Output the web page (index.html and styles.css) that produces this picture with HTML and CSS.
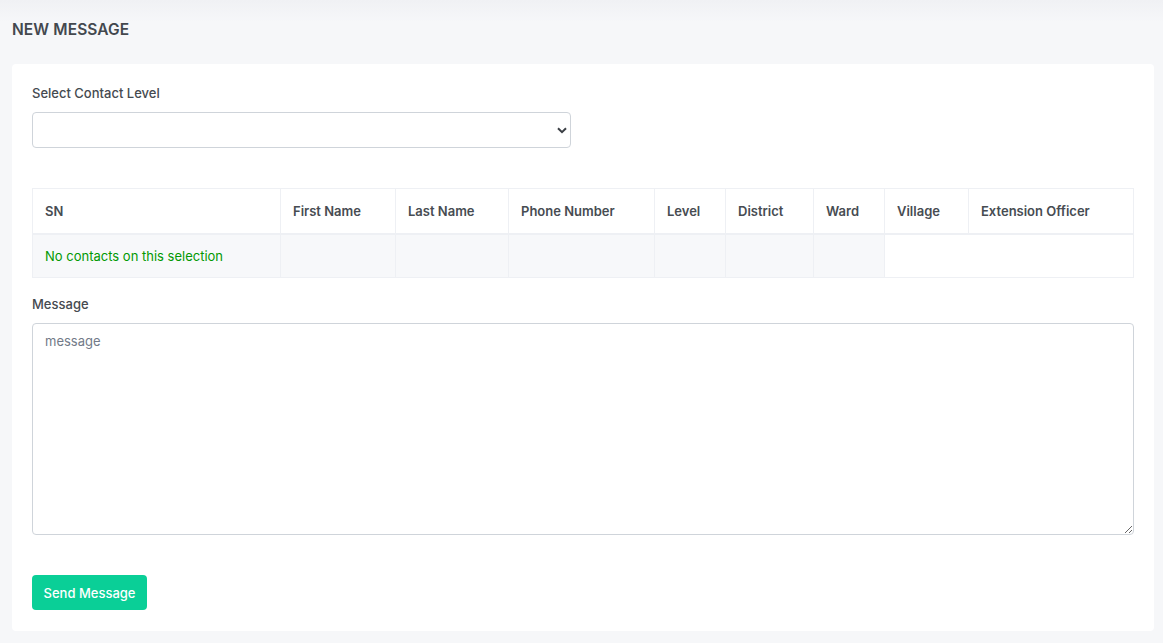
FILE: index.html
```html
<!DOCTYPE html>
<html>
<head>
<meta charset="utf-8">
<link rel="stylesheet" href="styles.css">
</head>
<body>
<div class="page">
  <h4 class="page-title">NEW MESSAGE</h4>
  <div class="card">
    <div class="form-group">
      <label class="form-label">Select Contact Level</label>
      <div class="select-wrap">
        <select class="form-select"><option></option></select>
        <svg class="chev" width="10" height="7" viewBox="0 0 10 7"><path d="M1 1.2 L5 5.2 L9 1.2" fill="none" stroke="#3b3f45" stroke-width="2"/></svg>
      </div>
    </div>
    <table class="table">
      <colgroup>
        <col class="c-sn"><col class="c-first"><col class="c-last"><col class="c-phone"><col class="c-level"><col class="c-district"><col class="c-ward"><col class="c-village"><col class="c-officer">
      </colgroup>
      <thead>
        <tr><th>SN</th><th>First Name</th><th>Last Name</th><th>Phone Number</th><th>Level</th><th>District</th><th>Ward</th><th>Village</th><th>Extension Officer</th></tr>
      </thead>
      <tbody>
        <tr><td class="empty-msg">No contacts on this selection</td><td></td><td></td><td></td><td></td><td></td><td></td><td class="blank" colspan="2"></td></tr>
      </tbody>
    </table>
    <div class="form-group msg">
      <label class="form-label">Message</label>
      <textarea class="form-control" placeholder="message"></textarea>
    </div>
    <button class="btn-success">Send Message</button>
  </div>
</div>
</body>
</html>
```
FILE: styles.css
```css
html, body {
  margin: 0;
  padding: 0;
}
body {
  background: linear-gradient(to bottom, #f0f1f4 0px, #f6f7f9 22px, #f6f7f9 100%);
  font-family: Inter, "Noto Sans", sans-serif;
  font-size: 13px;
  color: #495057;
  min-height: 643px;
}
.page {
  padding: 20px 9px 12px 12px;
}
.page-title {
  margin: 0 0 24px 0;
  font-size: 15.5px;
  line-height: 20px;
  font-weight: 600;
  color: #43484e;
  letter-spacing: 0.1px;
}
.card {
  background: #fff;
  border-radius: 4px;
  padding: 20px 20px 21px 20px;
}
.form-label {
  display: block;
  font-size: 13px;
  line-height: 18px;
  font-weight: 500;
  color: #454a50;
  margin-bottom: 10px;
}
.select-wrap {
  position: relative;
  width: 539px;
}
.form-select {
  display: block;
  width: 539px;
  height: 36px;
  border: 1px solid #cfd4da;
  border-radius: 4px;
  background: #fff;
  appearance: none;
  -webkit-appearance: none;
  padding: 0 12px;
  font-family: inherit;
  font-size: 13px;
}
.chev {
  position: absolute;
  right: 4px;
  top: 15px;
}
.table {
  margin-top: 40px;
  width: 1101px;
  table-layout: fixed;
  border-collapse: collapse;
}
.c-sn { width: 248px; }
.c-first { width: 115px; }
.c-last { width: 113px; }
.c-phone { width: 146px; }
.c-level { width: 71px; }
.c-district { width: 88px; }
.c-ward { width: 71px; }
.c-village { width: 84px; }
.c-officer { width: 165px; }
.table th, .table td {
  border: 1px solid #eef0f4;
  padding: 0 12px;
  text-align: left;
  font-size: 13px;
}
.table th {
  height: 44px;
  font-weight: 600;
  color: #474c52;
  border-bottom-width: 2px;
}
.table td {
  height: 42px;
  background: #f7f8fa;
}
.table td.blank {
  background: #fff;
}
.empty-msg {
  color: #029802;
}
.msg {
  margin-top: 17px;
}
.form-control {
  display: block;
  box-sizing: border-box;
  width: 1102px;
  height: 212px;
  border: 1px solid #cfd4da;
  border-radius: 4px;
  padding: 8px 12px;
  font-family: inherit;
  font-size: 13px;
  line-height: 18px;
  color: #495057;
  margin: 0;
}
.form-control::placeholder {
  color: #727a88;
}
.btn-success {
  display: block;
  margin-top: 40px;
  width: 115px;
  height: 35px;
  background: #0acf97;
  border: none;
  border-radius: 4px;
  color: #fff;
  font-family: inherit;
  font-size: 13px;
  font-weight: 500;
  padding: 0;
}
```
